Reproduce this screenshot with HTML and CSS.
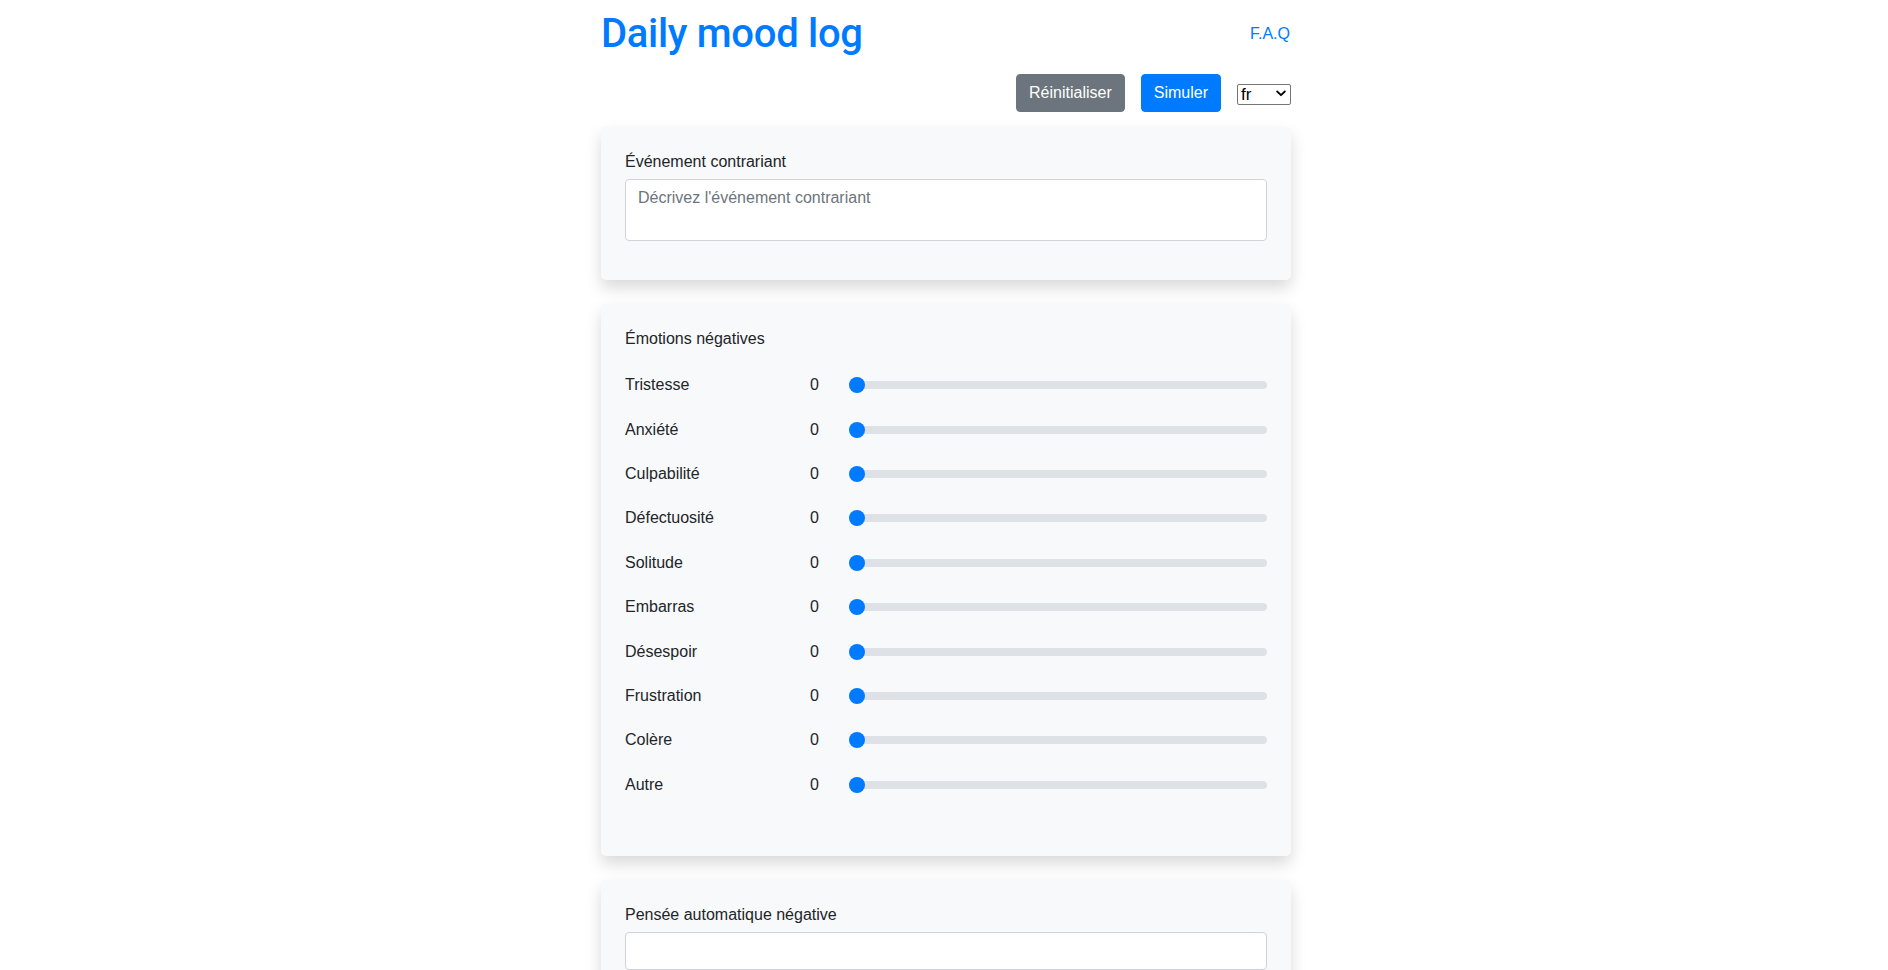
FILE: index.html
```html
<!DOCTYPE html>
<html lang="fr">
<head>
<meta charset="utf-8">
<title>Daily mood log</title>
<link rel="stylesheet" href="styles.css">
</head>
<body>
<div class="page">
  <header class="header">
    <h1 class="title">Daily mood log</h1>
    <a class="faq" href="#">F.A.Q</a>
  </header>
  <div class="toolbar">
    <button class="btn btn-secondary" type="button">Réinitialiser</button>
    <button class="btn btn-primary" type="button">Simuler</button>
    <span class="select-wrap">
      <select class="lang">
        <option>fr</option>
        <option>en</option>
      </select>
      <svg class="chev" width="10" height="7" viewBox="0 0 10 7" aria-hidden="true"><path d="M1.2 1.5 L5 5.2 L8.8 1.5" fill="none" stroke="#000" stroke-width="1.8" stroke-linecap="round" stroke-linejoin="round"/></svg>
    </span>
  </div>

  <section class="card">
    <div class="group">
      <label class="label">Événement contrariant</label>
      <textarea class="control area" rows="2" placeholder="Décrivez l'événement contrariant"></textarea>
    </div>
  </section>

  <section class="card">
    <div class="label">Émotions négatives</div>
    <div class="rows">
      <div class="row"><span>Tristesse</span><span class="val">0</span><input class="range" type="range" min="0" max="100" value="0"></div>
      <div class="row"><span>Anxiété</span><span class="val">0</span><input class="range" type="range" min="0" max="100" value="0"></div>
      <div class="row"><span>Culpabilité</span><span class="val">0</span><input class="range" type="range" min="0" max="100" value="0"></div>
      <div class="row"><span>Défectuosité</span><span class="val">0</span><input class="range" type="range" min="0" max="100" value="0"></div>
      <div class="row"><span>Solitude</span><span class="val">0</span><input class="range" type="range" min="0" max="100" value="0"></div>
      <div class="row"><span>Embarras</span><span class="val">0</span><input class="range" type="range" min="0" max="100" value="0"></div>
      <div class="row"><span>Désespoir</span><span class="val">0</span><input class="range" type="range" min="0" max="100" value="0"></div>
      <div class="row"><span>Frustration</span><span class="val">0</span><input class="range" type="range" min="0" max="100" value="0"></div>
      <div class="row"><span>Colère</span><span class="val">0</span><input class="range" type="range" min="0" max="100" value="0"></div>
      <div class="row"><span>Autre</span><span class="val">0</span><input class="range" type="range" min="0" max="100" value="0"></div>
    </div>
  </section>

  <section class="card">
    <div class="group">
      <label class="label">Pensée automatique négative</label>
      <input class="control input" type="text">
    </div>
  </section>
</div>
</body>
</html>
```

FILE: styles.css
```css
html, body {
  margin: 0;
  padding: 0;
}
body {
  padding-left: 4px;
  font-family: "Liberation Sans", Arial, sans-serif;
  font-size: 16px;
  line-height: 1.5;
  color: #212529;
  background: #fff;
}
.page {
  width: 690px;
  margin: 0 auto;
}
.header {
  display: flex;
  justify-content: space-between;
  align-items: center;
  padding-top: 10px;
}
.title {
  margin: 0;
  font-family: Roboto, "Liberation Sans", sans-serif;
  font-size: 40px;
  line-height: 48px;
  font-weight: 500;
  color: #007bff;
  letter-spacing: -0.3px;
}
.faq {
  color: #007bff;
  text-decoration: none;
  font-size: 16px;
  margin-right: 1px;
}
.toolbar {
  display: flex;
  justify-content: flex-end;
  align-items: center;
  gap: 16px;
  margin-top: 16px;
  margin-bottom: 15px;
}
.btn {
  font-family: inherit;
  font-size: 16px;
  line-height: 24px;
  padding: 6px 12px;
  border: 1px solid transparent;
  border-radius: 4px;
  color: #fff;
  cursor: pointer;
}
.btn-secondary {
  background: #6c757d;
  border-color: #6c757d;
}
.btn-primary {
  background: #007bff;
  border-color: #007bff;
}
.select-wrap {
  position: relative;
  display: block;
  width: 54px;
  height: 21px;
}
.lang {
  -webkit-appearance: none;
  appearance: none;
  box-sizing: border-box;
  width: 54px;
  height: 21px;
  margin: 0;
  padding: 0 0 0 3px;
  border: 1px solid #767676;
  border-radius: 2px;
  background: #fff;
  color: #000;
  font-family: "Liberation Sans", Arial, sans-serif;
  font-size: 17px;
  line-height: 19px;
}
.chev {
  position: absolute;
  right: 5px;
  top: 7px;
  pointer-events: none;
}
.card {
  background: #f8f9fa;
  border-radius: 5px;
  box-shadow: 0 8px 16px rgba(0, 0, 0, 0.15);
  padding: 23px 24px 23px;
  margin-bottom: 24px;
}
.group {
  margin-bottom: 16px;
}
.label {
  display: block;
  line-height: 24px;
  margin-bottom: 5px;
}
.control {
  display: block;
  box-sizing: border-box;
  width: 100%;
  font-family: inherit;
  font-size: 16px;
  line-height: 24px;
  color: #495057;
  background: #fff;
  border: 1px solid #ced4da;
  border-radius: 4px;
  padding: 6px 12px;
  margin: 0;
}
.area {
  height: 62px;
  resize: none;
}
.area::placeholder {
  color: #6c757d;
  opacity: 1;
}
.input {
  height: 38px;
}
.card .label + .rows {
  margin-top: 12px;
}
.rows {
  margin-bottom: 26px;
}
.row {
  display: grid;
  grid-template-columns: 185px 39px 1fr;
  align-items: center;
  height: 44.4px;
}
.val {
  padding-left: 0;
}
.range {
  -webkit-appearance: none;
  appearance: none;
  width: 100%;
  height: 16px;
  margin: 0;
  padding: 0;
  background: transparent;
}
.range::-webkit-slider-runnable-track {
  height: 8px;
  background: #dee2e6;
  border-radius: 16px;
  border: 0;
}
.range::-webkit-slider-thumb {
  -webkit-appearance: none;
  appearance: none;
  width: 16px;
  height: 16px;
  margin-top: -4px;
  border: 0;
  border-radius: 50%;
  background: #007bff;
}
```
